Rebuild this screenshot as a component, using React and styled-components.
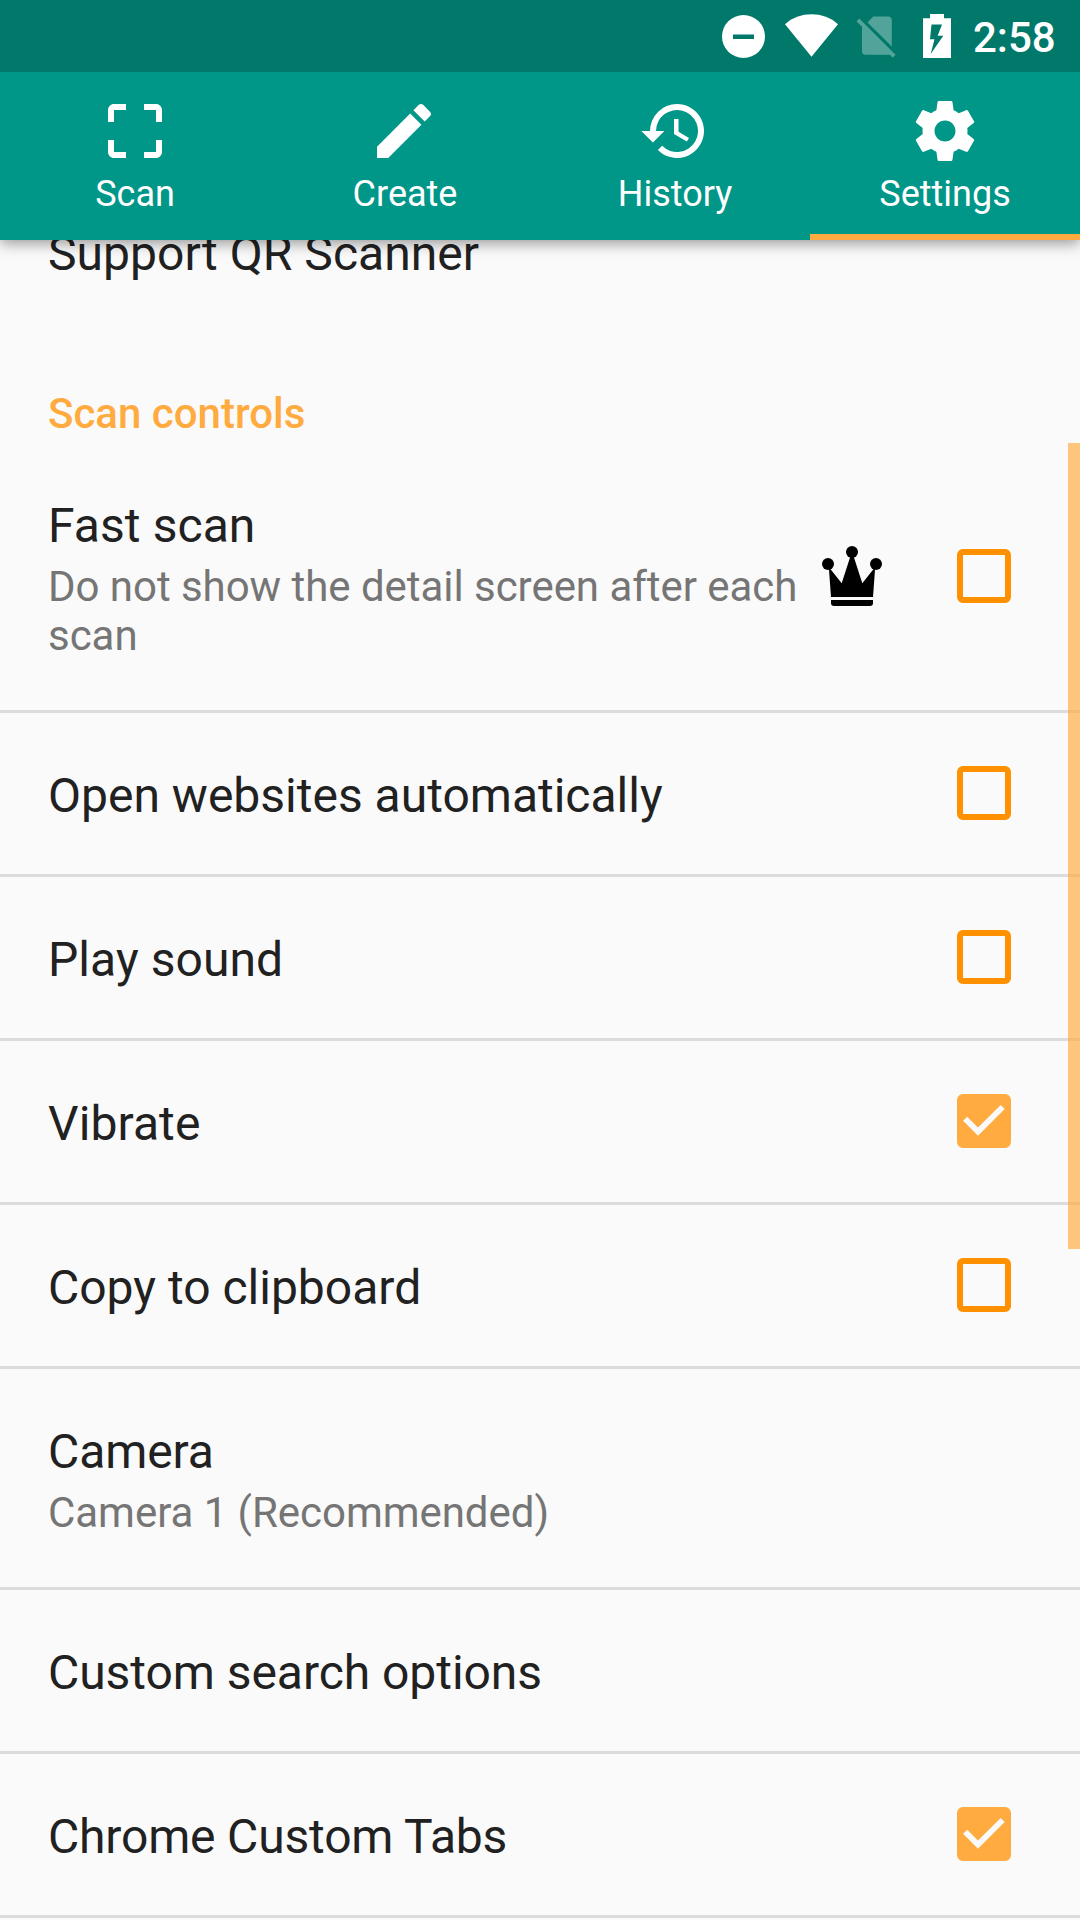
import React from "react";
import styled, { createGlobalStyle } from "styled-components";

const GlobalStyle = createGlobalStyle`
  *, *::before, *::after { box-sizing: border-box; }
  body {
    margin: 0;
    background: #fafafa;
    font-family: Roboto, "Noto Sans", sans-serif;
  }
`;

const Screen = styled.div`
  display: flex;
  flex-direction: column;
  width: 1080px;
  height: 1920px;
  overflow: hidden;
  background: #fafafa;
`;

const StatusBar = styled.div`
  display: flex;
  flex: none;
  align-items: center;
  justify-content: flex-end;
  height: 72px;
  padding-right: 24px;
  background: #00796b;
  z-index: 2;
`;

const StatusIcons = styled.svg`
  width: 240px;
  height: 72px;
  margin-right: 13px;
`;

const Clock = styled.span`
  width: 83px;
  padding-top: 2px;
  color: #fff;
  font-size: 42px;
  font-weight: 500;
  line-height: 49px;
  white-space: nowrap;
`;

const TabBar = styled.nav`
  display: grid;
  flex: none;
  grid-template-columns: repeat(4, 1fr);
  height: 168px;
  background: #009688;
  box-shadow: 0 3px 14px rgba(0, 0, 0, 0.42);
  z-index: 1;
`;

const Tab = styled.div`
  display: flex;
  flex-direction: column;
  align-items: center;
  padding-top: 23px;
  color: #fff;
  border-bottom: 6px solid ${(p) => (p.$active ? "#ffab40" : "transparent")};
`;

const Icon = styled.svg`
  flex: none;
  width: 72px;
  height: 72px;
  fill: currentColor;
`;

const TabLabel = styled.span`
  margin-top: 6px;
  font-size: 36px;
  line-height: 42px;
`;

const Content = styled.main`
  position: relative;
  flex: 1;
  min-height: 0;
  overflow: hidden;
`;

const List = styled.div`
  display: flex;
  flex-direction: column;
  margin-top: -69px;
`;

const Row = styled.div`
  display: flex;
  flex: none;
  align-items: center;
  padding: 0 60px 0 48px;
  border-bottom: ${(p) => (p.$divider ? "3px solid #dcdcdc" : "none")};
`;

const RowText = styled.div`
  display: flex;
  flex: 1;
  flex-direction: column;
  gap: 8px;
  min-width: 0;
  padding: 55px 0 50px;
`;

const Title = styled.span`
  color: #212121;
  font-size: 48px;
  line-height: 56px;
  letter-spacing: ${(p) => p.$tracking || 0}px;
`;

const Summary = styled.span`
  color: #757575;
  font-size: 42px;
  line-height: 49px;
  letter-spacing: -0.04px;
`;

const SectionHeader = styled.h2`
  flex: none;
  height: 111px;
  margin: 0;
  padding: 57px 48px 0;
  color: #ffab40;
  font-size: 42px;
  font-weight: 500;
  line-height: 49px;
`;

const Crown = styled(Icon)`
  margin: 0 60px 1px 0;
  color: #000;
`;

const CheckIcon = styled(Icon)`
  margin-bottom: 1px;
  color: ${(p) => (p.$checked ? "#ffab40" : "#ff9100")};
`;

const ScrollThumb = styled.div`
  position: absolute;
  top: 203px;
  right: 0;
  width: 12px;
  height: 806px;
  background: rgba(255, 171, 64, 0.68);
`;

const tabs = [
  {
    label: "Scan",
    path: "M3 5v4h2V5h4V3H5c-1.1 0-2 .9-2 2zm2 10H3v4c0 1.1.9 2 2 2h4v-2H5v-4zm14 4h-4v2h4c1.1 0 2-.9 2-2v-4h-2v4zm0-16h-4v2h4v4h2V5c0-1.1-.9-2-2-2z",
  },
  {
    label: "Create",
    viewBox: "0.33 0 24 24",
    path: "M3 17.25V21h3.75L17.81 9.94l-3.75-3.75L3 17.25zM20.71 7.04c.39-.39.39-1.02 0-1.41l-2.34-2.34c-.39-.39-1.02-.39-1.41 0l-1.83 1.83 3.75 3.75 1.83-1.83z",
  },
  {
    label: "History",
    viewBox: "0.33 0 24 24",
    path: "M13 3a9 9 0 0 0-9 9H1.1l3.87 3.85L8.8 12H6a7 7 0 1 1 2.05 4.95l-1.42 1.42A9 9 0 1 0 13 3zm-1 5v5l4.28 2.54.72-1.21-3.5-2.08V8H12z",
  },
  {
    label: "Settings",
    active: true,
    path: "M19.43 12.98c.04-.32.07-.64.07-.98s-.03-.66-.07-.98l2.11-1.65c.19-.15.24-.42.12-.64l-2-3.46c-.12-.22-.39-.3-.61-.22l-2.49 1c-.52-.4-1.08-.73-1.69-.98l-.38-2.65C14.46 2.18 14.25 2 14 2h-4c-.25 0-.46.18-.49.42l-.38 2.65c-.61.25-1.17.59-1.69.98l-2.49-1c-.23-.09-.49 0-.61.22l-2 3.46c-.13.22-.07.49.12.64l2.11 1.65c-.04.32-.07.65-.07.98s.03.66.07.98l-2.11 1.65c-.19.15-.24.42-.12.64l2 3.46c.12.22.39.3.61.22l2.49-1c.52.4 1.08.73 1.69.98l.38 2.65c.03.24.24.42.49.42h4c.25 0 .46-.18.49-.42l.38-2.65c.61-.25 1.17-.59 1.69-.98l2.49 1c.23.09.49 0 .61-.22l2-3.46c.12-.22.07-.49-.12-.64l-2.11-1.65zM12 15.5c-1.93 0-3.5-1.57-3.5-3.5s1.57-3.5 3.5-3.5 3.5 1.57 3.5 3.5-1.57 3.5-3.5 3.5z",
  },
];

const settings = [
  {
    title: "Fast scan",
    summary: "Do not show the detail screen after each scan",
    premium: true,
    checked: false,
    tracking: 0.08,
  },
  { title: "Open websites automatically", checked: false },
  { title: "Play sound", checked: false, tracking: 0.06 },
  { title: "Vibrate", checked: true, tracking: 0.1 },
  { title: "Copy to clipboard", checked: false },
  { title: "Camera", summary: "Camera 1 (Recommended)", tracking: -0.1 },
  { title: "Custom search options", tracking: -0.05 },
  { title: "Chrome Custom Tabs", checked: true, tracking: -0.17 },
];

function Checkbox({ checked }) {
  return (
    <CheckIcon viewBox="0 0 72 72" $checked={checked}>
      {checked ? (
        <path
          fillRule="evenodd"
          d="M15 9h42a6 6 0 0 1 6 6v42a6 6 0 0 1-6 6H15a6 6 0 0 1-6-6V15a6 6 0 0 1 6-6zM30 50.7 56.7 24l-4-4L30 42.5 19.2 31.7l-4.1 4.1z"
        />
      ) : (
        <path
          fillRule="evenodd"
          d="M15 9h42a6 6 0 0 1 6 6v42a6 6 0 0 1-6 6H15a6 6 0 0 1-6-6V15a6 6 0 0 1 6-6zM15 15v42h42V15z"
        />
      )}
    </CheckIcon>
  );
}

function PremiumIcon() {
  return (
    <Crown viewBox="0 0 72 72">
      <circle cx="12" cy="24" r="6" />
      <circle cx="36" cy="12" r="6" />
      <circle cx="60" cy="24" r="6" />
      <path d="M12.8 27 15 57h42l2.2-30L46.3 43.2 37.5 16h-3L25.7 43.2z" />
      <path d="M15 60h42v3a3 3 0 0 1-3 3H18a3 3 0 0 1-3-3z" />
    </Crown>
  );
}

function SystemIcons() {
  return (
    <StatusIcons viewBox="720 0 240 72" fill="#fff">
      <path
        fillRule="evenodd"
        d="M743.5 15a21.5 21.5 0 1 0 0 43 21.5 21.5 0 0 0 0-43zM733 34.5h21V39h-21z"
      />
      <path d="M785 24.2C799 10.9 824 10.9 838 24.2L811.5 56.7z" />
      <g opacity="0.32">
        <path d="M867.5 22.5 873.2 16.5H888a3.8 3.8 0 0 1 3.8 3.8V46.5z" />
        <path d="M859.3 18.5 895.5 54.8 892.8 57.7 889.8 54.7H865.8a3.8 3.8 0 0 1-3.8-3.8V26.8L856.5 21.4z" />
      </g>
      <path
        fillRule="evenodd"
        d="M930 14h14v4.3h7V58h-28V18.3h7zM931.5 24.5 930 39.2h4.5L930.7 54 943.3 35.7H937.7L942 24.5z"
      />
    </StatusIcons>
  );
}

export default function App() {
  return (
    <>
      <GlobalStyle />
      <Screen>
        <StatusBar>
          <SystemIcons />
          <Clock>2:58</Clock>
        </StatusBar>
        <TabBar>
          {tabs.map((tab) => (
            <Tab key={tab.label} $active={tab.active}>
              <Icon viewBox={tab.viewBox || "0 0 24 24"}>
                <path d={tab.path} />
              </Icon>
              <TabLabel>{tab.label}</TabLabel>
            </Tab>
          ))}
        </TabBar>
        <Content>
          <List>
            <Row>
              <RowText>
                <Title $tracking={0.05}>Support QR Scanner</Title>
              </RowText>
            </Row>
            <SectionHeader>Scan controls</SectionHeader>
            {settings.map((item) => (
              <Row key={item.title} $divider>
                <RowText>
                  <Title $tracking={item.tracking}>{item.title}</Title>
                  {item.summary && <Summary>{item.summary}</Summary>}
                </RowText>
                {item.premium && <PremiumIcon />}
                {item.checked !== undefined && (
                  <Checkbox checked={item.checked} />
                )}
              </Row>
            ))}
          </List>
          <ScrollThumb />
        </Content>
      </Screen>
    </>
  );
}
